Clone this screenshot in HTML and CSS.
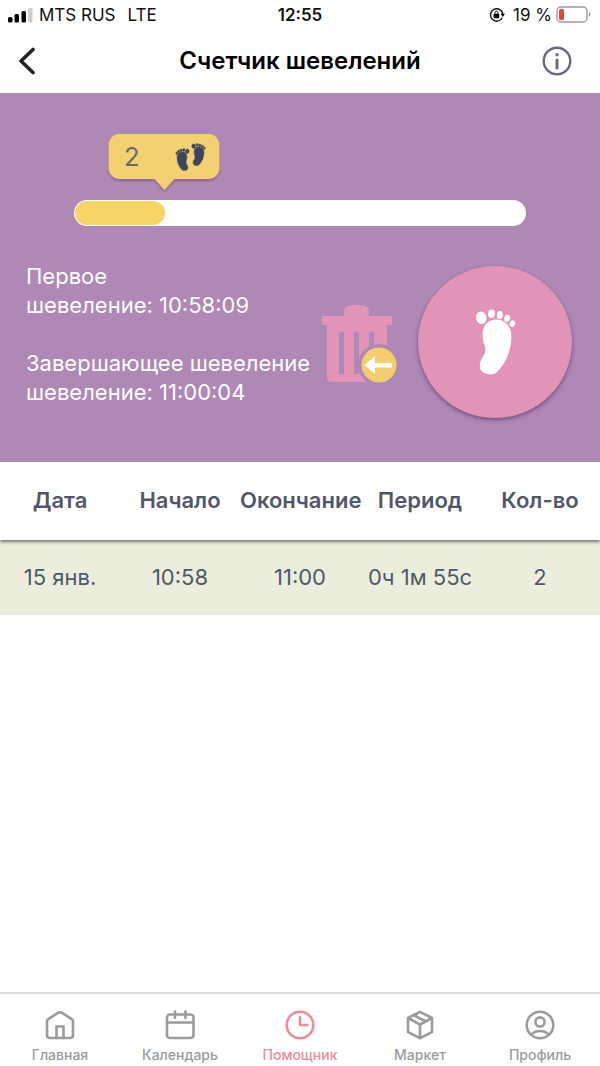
FILE: index.html
```html
<!DOCTYPE html>
<html lang="ru">
<head>
<meta charset="utf-8">
<meta name="viewport" content="width=device-width, initial-scale=1">
<title>Счетчик шевелений</title>
<link rel="stylesheet" href="styles.css">
</head>
<body>
<svg class="symbols" aria-hidden="true">
  <symbol id="foot" viewBox="490 175 130 205">
    <path d="M550 210C580 207 603 226 603 262C603 300 588 338 562 366C549 380 523 378 511 364C504 350 508 336 517 322C526 308 527 301 521 286C511 252 515 215 550 210Z"/>
    <ellipse cx="512" cy="204" rx="16" ry="19" transform="rotate(-10 512 204)"/>
    <ellipse cx="543" cy="192" rx="10" ry="13"/>
    <ellipse cx="568" cy="196" rx="9" ry="12"/>
    <ellipse cx="590" cy="206" rx="9" ry="11" transform="rotate(15 590 206)"/>
    <ellipse cx="606" cy="222" rx="8" ry="10" transform="rotate(25 606 222)"/>
  </symbol>
</svg>
<div class="app">
  <div class="status">
    <div class="status-left">
      <svg class="signal" viewBox="0 0 25 16" aria-hidden="true">
        <rect x="0" y="10" width="4.500" height="5.500" rx="1.500"/>
        <rect x="6.500" y="7" width="4.500" height="8.500" rx="1.500"/>
        <rect x="13.500" y="4" width="4.500" height="11.500" rx="1.500"/>
        <rect x="20" y="1" width="4.500" height="14.500" rx="1.500" fill="#ccc"/>
      </svg>
      <span>MTS RUS</span><span class="network">LTE</span>
    </div>
    <time class="clock">12:55</time>
    <div class="status-right">
      <svg class="lock" viewBox="0 0 16 16" aria-hidden="true">
        <path d="M13.2 10.8A6.2 6.2 0 1 1 13.8 7" fill="none" stroke="#111" stroke-width="1.4"/>
        <path d="M11.5 6.8H16L13.8 10Z"/>
        <rect x="4.6" y="6.8" width="5.6" height="4.4" rx=".6"/>
        <path d="M5.8 7V5.8a1.6 1.6 0 0 1 3.2 0V7" fill="none" stroke="#111"/>
      </svg>
      <span>19 %</span>
      <svg class="battery" viewBox="0 0 36 18" aria-hidden="true">
        <rect x="1" y="1" width="30" height="15" rx="4" fill="#fff" stroke="#9b9b9b" stroke-width="1.4"/>
        <rect x="3" y="3" width="5" height="11" rx="1.5" fill="#e0483e"/>
        <path d="M33 6q3 2.500 0 5z" fill="#9b9b9b"/>
      </svg>
    </div>
  </div>

  <header class="header">
    <button class="icon-button" aria-label="Назад">
      <svg class="back" viewBox="0 0 18 28" aria-hidden="true"><path d="M15 2.500L3 14L15 25.500" fill="none" stroke="#222" stroke-width="3.600" stroke-linecap="round" stroke-linejoin="round"/></svg>
    </button>
    <h1 class="title">Счетчик шевелений</h1>
    <button class="icon-button icon-button-end" aria-label="Информация">
      <svg class="info" viewBox="0 0 30 30" aria-hidden="true" fill="none" stroke="#686a80" stroke-linecap="round"><circle cx="15" cy="15" r="13.300" stroke-width="2.400"/><path d="M15 14V22" stroke-width="3"/><circle cx="15" cy="8.700" r="1.700" fill="#686a80" stroke="none"/></svg>
    </button>
  </header>

  <main class="main">
    <section class="hero">
      <div class="progress" role="progressbar" aria-valuenow="2" aria-valuemin="0" aria-valuemax="10" aria-label="Шевеления">
        <div class="progress-fill" style="width: 20%"></div>
        <div class="bubble" style="left: 20%">
          <span>2</span>
          <svg class="feet" viewBox="0 0 32 28" fill="#3b455d" stroke="#3b455d" stroke-width="5" aria-hidden="true">
            <use href="#foot" width="16" height="23" transform="translate(16 5) scale(-1 1)"/>
            <use href="#foot" x="16" y="0" width="16" height="23"/>
          </svg>
        </div>
      </div>
      <div class="controls">
        <div class="times">
          <p>Первое<br>шевеление: 10:58:09</p>
          <p>Завершающее шевеление<br>шевеление: 11:00:04</p>
        </div>
        <button class="delete" aria-label="Удалить последнее шевеление">
          <svg class="trash" viewBox="10 8 80 82" aria-hidden="true">
            <path fill="#e194b8" d="M12 21H34V17Q34 10 42 10H51Q59 10 59 17V21H82V30H77V82Q77 87 71 87H22Q17 87 17 82V30H12Z"/>
            <path fill="#af88b6" d="M29 37H34V79H29ZM44 37H49V79H44ZM59 37H64V79H59Z"/>
            <circle cx="69" cy="70" r="21" fill="#af88b6"/>
            <circle cx="69" cy="70" r="17.500" fill="#f3cd6e"/>
            <path fill="#fff" d="M54.500 70L65 61V68H82V72.500H65V79Z"/>
          </svg>
        </button>
        <button class="kick" aria-label="Отметить шевеление">
          <svg class="kick-foot" fill="#fff" aria-hidden="true"><use href="#foot"/></svg>
        </button>
      </div>
    </section>

    <table class="log">
      <thead>
        <tr><th scope="col">Дата</th><th scope="col">Начало</th><th scope="col">Окончание</th><th scope="col">Период</th><th scope="col">Кол-во</th></tr>
      </thead>
      <tbody>
        <tr><td>15 янв.</td><td>10:58</td><td>11:00</td><td>0ч 1м 55с</td><td>2</td></tr>
      </tbody>
    </table>
  </main>

  <nav class="tabs">
    <a class="tab" href="#home">
      <svg class="tab-icon" viewBox="0 0 30 30" aria-hidden="true"><path d="M2 11.500Q2 10 3.300 9.100L13 2.800Q15 1.600 17 2.800L26.700 9.100Q28 10 28 11.500V25Q28 28 25 28H5Q2 28 2 25Z"/><path d="M11.500 28V16.500H18.500V28"/></svg>
      Главная
    </a>
    <a class="tab" href="#calendar">
      <svg class="tab-icon" viewBox="0 0 30 30" aria-hidden="true"><rect x="2" y="4.500" width="26.500" height="23.500" rx="3"/><path d="M2 12.500H28.500M10 1.500V8M20.500 1.500V8"/></svg>
      Календарь
    </a>
    <a class="tab tab-active" href="#helper" aria-current="page">
      <svg class="tab-icon" viewBox="0 0 30 30" aria-hidden="true"><circle cx="15" cy="15" r="13.300"/><path d="M15 7V15H22.500"/></svg>
      Помощник
    </a>
    <a class="tab" href="#market">
      <svg class="tab-icon" viewBox="0 0 30 30" aria-hidden="true"><path d="M15 1.800L27 8V22L15 28.200L3 22V8Z"/><path d="M3 8L15 14.500L27 8M15 14.500V28M8.500 5L21 11.500"/></svg>
      Маркет
    </a>
    <a class="tab" href="#profile">
      <svg class="tab-icon" viewBox="0 0 30 30" aria-hidden="true"><circle cx="15" cy="15" r="13.300"/><circle cx="15" cy="12" r="4.600"/><path d="M6.500 24.500Q9.500 21 15 21Q20.500 21 23.500 24.500"/></svg>
      Профиль
    </a>
  </nav>
</div>
</body>
</html>
```
FILE: styles.css
```css
* { box-sizing: border-box; }

body {
  margin: 0;
  background: #fff;
  color: #515769;
  font-family: Inter, "Noto Sans", sans-serif;
  font-size: 22px;
}

button {
  padding: 0;
  border: 0;
  background: none;
  cursor: pointer;
}

svg { display: block; flex: none; }

.symbols { position: absolute; width: 0; height: 0; }

.app {
  display: flex;
  flex-direction: column;
  min-height: 100vh;
}

.status {
  display: grid;
  grid-template-columns: 1fr auto 1fr;
  align-items: center;
  height: 30px;
  padding: 0 8px;
  color: #111;
  font-size: 17px;
}

.status-left, .status-right { display: flex; align-items: center; }
.status-left { gap: 6px; }
.status-right { justify-content: flex-end; gap: 4px; }
.network { margin-left: 6px; }
.clock { font-weight: 600; }
.signal { width: 25px; height: 16px; }
.lock { width: 16px; height: 16px; margin-right: 4px; }
.battery { width: 36px; height: 18px; }

.header {
  display: grid;
  grid-template-columns: 60px 1fr 60px;
  align-items: center;
  height: 63px;
  padding: 0 18px 2px;
}

.icon-button { justify-self: start; }
.icon-button-end { justify-self: end; margin-right: 10px; }
.back { width: 18px; height: 28px; }
.info { width: 30px; height: 30px; }

.title {
  margin: 0;
  color: #000;
  font-size: 24px;
  font-weight: 600;
  text-align: center;
}

.main { flex: 1; }

.hero {
  padding: 107px 28px 44px 26px;
  background: #af88b6;
}

.progress {
  position: relative;
  width: auto;
  height: 26px;
  margin: 0 46px 0 48px;
  padding: 1px;
  border-radius: 13px;
  background: #fff;
}

.progress-fill {
  height: 100%;
  border-radius: 12px;
  background: #f6d566;
}

.bubble {
  position: absolute;
  bottom: 47px;
  display: flex;
  align-items: center;
  justify-content: space-between;
  width: 111px;
  height: 45px;
  padding: 0 13px 0 15px;
  border-radius: 11px;
  background: #f3d070;
  color: #6b6670;
  font-size: 26px;
  transform: translateX(-50%);
  filter: drop-shadow(0 2px 1px rgb(80 40 80 / 35%));
}

.bubble::after {
  content: "";
  position: absolute;
  top: 100%;
  left: 50%;
  border: 10px solid transparent;
  border-top: 11px solid #f3d070;
  border-bottom: 0;
  transform: translateX(-50%);
}

.feet { width: 32px; height: 28px; }

.controls {
  display: flex;
  align-items: center;
  margin-top: 40px;
}

.times {
  flex: 1;
  align-self: flex-start;
  min-width: 0;
  margin-top: -4px;
  color: #fff;
  line-height: 29px;
  white-space: nowrap;
}

.times p { margin: 0; }
.times p + p { margin-top: 29px; }

.delete { padding-top: 4px; }
.trash { width: 80px; height: 82px; }

.kick {
  display: grid;
  place-items: center;
  width: 154px;
  height: 152px;
  margin-left: 18px;
  border-radius: 50%;
  background: #e194b8;
  box-shadow: 0 2px 4px rgb(80 40 80 / 60%);
}

.kick-foot { width: 43px; height: 68px; }

.log {
  width: 100%;
  border-collapse: collapse;
  table-layout: fixed;
  text-align: center;
}

.log th, .log td { padding: 0 0 2px; white-space: nowrap; }
.log th { height: 78px; font-weight: 600; }
.log td { height: 75px; }
.log thead { position: relative; background: #fff; box-shadow: 0 2px 3px rgb(0 0 0 / 50%); clip-path: inset(0 0 -6px); }
.log tbody { background: #ebeedd; }

.tabs {
  display: grid;
  grid-template-columns: repeat(5, 1fr);
  height: 74px;
  border-top: 2px solid #dedede;
}

.tab {
  display: flex;
  flex-direction: column;
  align-items: center;
  gap: 6px;
  padding-top: 16px;
  color: #9b9b9b;
  font-size: 14px;
  font-weight: 500;
  line-height: 18px;
  text-decoration: none;
}

.tab-active { color: #ee8b98; }

.tab-icon {
  width: 30px;
  height: 30px;
  fill: none;
  stroke: currentColor;
  stroke-width: 2.6;
  stroke-linejoin: round;
  stroke-linecap: round;
}
```
